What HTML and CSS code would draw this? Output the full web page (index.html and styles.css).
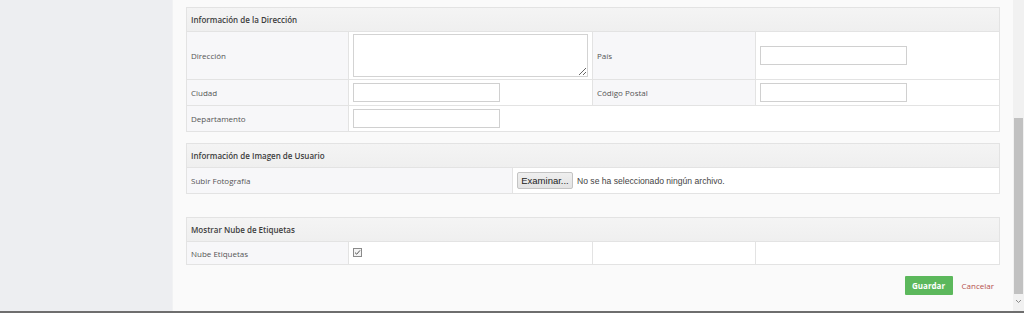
FILE: index.html
```html
<!DOCTYPE html>
<html lang="es">
<head>
    <meta charset="UTF-8">
    <meta name="viewport" content="width=device-width, initial-scale=1.0">
    <title>Perfil de Usuario</title>
    <link rel="stylesheet" href="styles.css">
</head>
<body>
    <div class="screen">
        <aside class="sidebar"></aside>

        <main class="content">
            <!-- Dirección -->
            <section class="panel">
                <div class="panel-heading">Información de la Dirección</div>
                <div class="grid grid-four">
                    <div class="cell label row-tall">Dirección</div>
                    <div class="cell field row-tall"><textarea class="text-area"></textarea></div>
                    <div class="cell label row-tall">País</div>
                    <div class="cell field last row-tall"><input type="text" class="text-input"></div>

                    <div class="cell label">Ciudad</div>
                    <div class="cell field"><input type="text" class="text-input"></div>
                    <div class="cell label">Código Postal</div>
                    <div class="cell field last"><input type="text" class="text-input"></div>

                    <div class="cell label bottom">Departamento</div>
                    <div class="cell field bottom span-three"><input type="text" class="text-input"></div>
                </div>
            </section>

            <!-- Imagen -->
            <section class="panel panel-image">
                <div class="panel-heading">Información de Imagen de Usuario</div>
                <div class="grid grid-two">
                    <div class="cell label bottom">Subir Fotografía</div>
                    <div class="cell field last bottom">
                        <button type="button" class="file-button">Examinar...</button>
                        <span class="file-name">No se ha seleccionado ningún archivo.</span>
                    </div>
                </div>
            </section>

            <!-- Etiquetas -->
            <section class="panel panel-tags">
                <div class="panel-heading">Mostrar Nube de Etiquetas</div>
                <div class="grid grid-four">
                    <div class="cell label bottom">Nube Etiquetas</div>
                    <div class="cell field bottom">
                        <span class="check-box">
                            <svg width="9" height="9" viewBox="0 0 9 9">
                                <rect x="0.5" y="0.5" width="8" height="8" fill="#f4f4f4" stroke="#8a8a8a"/>
                                <path d="M2 4.6 L3.7 6.2 L7 2.4" fill="none" stroke="#555" stroke-width="1"/>
                            </svg>
                        </span>
                    </div>
                    <div class="cell field bottom"></div>
                    <div class="cell field last bottom"></div>
                </div>
            </section>

            <div class="actions">
                <button type="button" class="btn-save">Guardar</button>
                <a href="#" class="link-cancel">Cancelar</a>
            </div>
        </main>

        <div class="scrollbar">
            <div class="scroll-thumb"></div>
            <span class="scroll-arrow">
                <svg width="7" height="5" viewBox="0 0 7 5"><path d="M1 1 L3.5 3.5 L6 1" fill="none" stroke="#8a8a8a" stroke-width="1"/></svg>
            </span>
        </div>
    </div>
    <div class="window-edge"></div>
</body>
</html>
```

FILE: styles.css
```css
/* estilos de la pantalla de perfil */
* {
    box-sizing: border-box;
}

body {
    margin: 0;
    height: 313px;
    overflow: hidden;
    font-family: "Open Sans", "Liberation Sans", sans-serif;
    font-size: 8px;
    color: #555;
    background-color: #fafafa;
}

.screen {
    display: flex;
    height: 311px;
}

.sidebar {
    width: 172px;
    flex-shrink: 0;
    background-color: #edeef1;
}

.content {
    flex: 1;
    padding: 7px 13px 0 13px;
    border-left: 1px solid #f1f2f3;
    background-color: #fafafa;
}

.panel {
    border: 1px solid #e3e3e3;
    background-color: #fff;
}

.panel-image {
    margin-top: 11px;
}

.panel-tags {
    margin-top: 23px;
}

.panel-heading {
    height: 24px;
    padding: 0 4px;
    display: flex;
    align-items: center;
    font-weight: 600;
    color: #3d3d3d;
    background: linear-gradient(#f4f4f4, #efefef);
    border-bottom: 1px solid #e3e3e3;
}

.grid {
    display: grid;
}

.grid-four {
    grid-template-columns: 162px 244px 163px 1fr;
}

.grid-two {
    grid-template-columns: 326px 1fr;
}

.cell {
    height: 26px;
    display: flex;
    align-items: center;
    padding: 0 4px;
    border-right: 1px solid #e3e3e3;
    border-bottom: 1px solid #e3e3e3;
}

.cell.label {
    padding-left: 4px;
    background-color: #f7f7f9;
    color: #555;
}

.cell.last {
    border-right: none;
}

.cell.bottom {
    border-bottom: none;
    height: 25px;
}

.cell.row-tall {
    height: 48px;
}

.panel-tags .cell {
    height: 22px;
}

.span-three {
    grid-column: span 3;
    border-right: none;
}

.text-area {
    width: 236px;
    height: 43px;
    margin: 0;
    border: 1px solid #d3d3d3;
    border-radius: 0;
    padding: 2px;
    font-family: inherit;
    font-size: 8px;
    resize: both;
}

.text-input {
    width: 147px;
    height: 19px;
    margin: 0;
    padding: 2px 4px;
    border: 1px solid #d0d0d0;
    border-radius: 0;
    font-family: inherit;
    font-size: 8px;
}

.file-button {
    height: 17px;
    width: 56px;
    margin: 0;
    padding: 0;
    border: 1px solid #c4c4c4;
    border-radius: 2px;
    background: linear-gradient(#efefef, #e3e3e3);
    font-family: "Liberation Sans", Arial, sans-serif;
    font-size: 9.5px;
    color: #222;
}

.file-name {
    margin-left: 4px;
    font-family: "Liberation Sans", Arial, sans-serif;
    font-size: 8.6px;
    color: #444;
}

.check-box {
    display: inline-flex;
    margin-top: -2px;
}

.actions {
    display: flex;
    justify-content: flex-end;
    align-items: center;
    margin-top: 11px;
    padding-right: 6px;
}

.btn-save {
    width: 48px;
    height: 19px;
    padding: 0;
    border: none;
    border-radius: 1px;
    background-color: #5cb85c;
    color: #fff;
    font-family: inherit;
    font-size: 8px;
    font-weight: bold;
}

.link-cancel {
    margin-left: 9px;
    color: #b5504c;
    text-decoration: none;
}

.scrollbar {
    width: 11px;
    flex-shrink: 0;
    display: flex;
    flex-direction: column;
    align-items: center;
    background-color: #f1f1f1;
    padding-top: 118px;
}

.scroll-thumb {
    width: 9px;
    height: 176px;
    background-color: #c1c1c1;
}

.scroll-arrow {
    display: flex;
    margin-top: 5px;
}

.window-edge {
    height: 2px;
    background-color: #6e6e6e;
}
```
